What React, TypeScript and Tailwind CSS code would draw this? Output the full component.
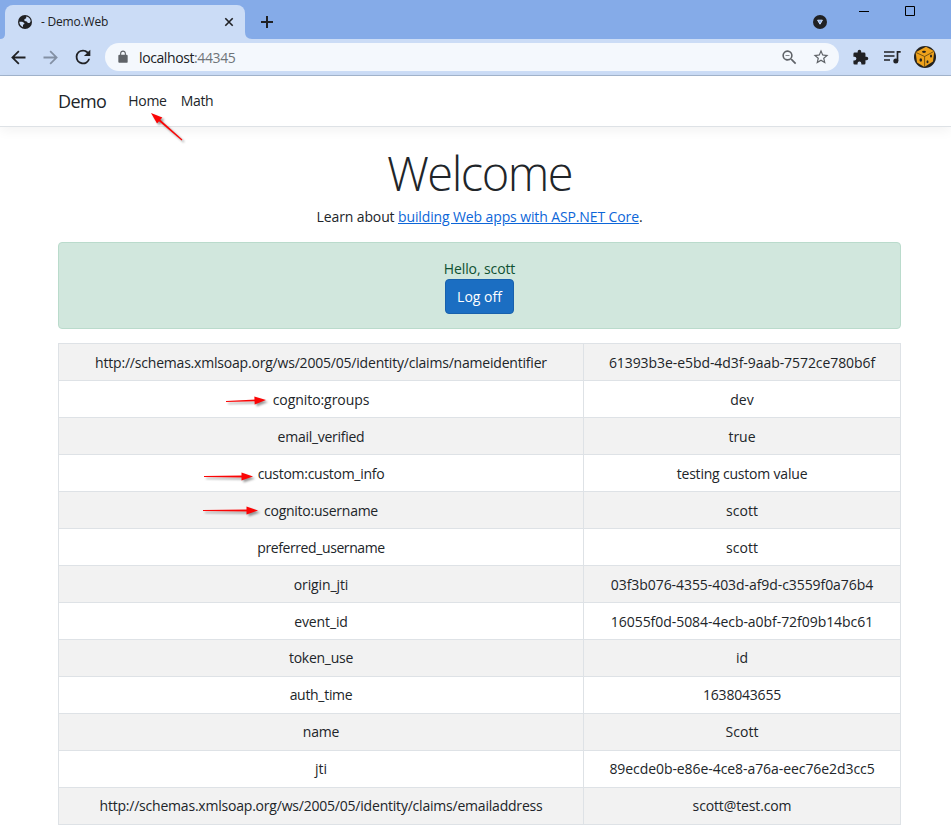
import React from "react";

/** Claim type, claim value, and the tracking of each of the two cells. */
const claims: [string, string, string, string][] = [
  ["http://schemas.xmlsoap.org/ws/2005/05/identity/claims/nameidentifier", "61393b3e-e5bd-4d3f-9aab-7572ce780b6f", "tracking-[-0.2px]", "tracking-[-0.07px]"],
  ["cognito:groups", "dev", "tracking-[-0.07px]", ""],
  ["email_verified", "true", "tracking-[-0.27px]", ""],
  ["custom:custom_info", "testing custom value", "tracking-[-0.28px]", "tracking-[-0.2px]"],
  ["cognito:username", "scott", "tracking-[-0.25px]", ""],
  ["preferred_username", "scott", "tracking-[-0.4px]", ""],
  ["origin_jti", "03f3b076-4355-403d-af9d-c3559f0a76b4", "tracking-[-0.1px]", "tracking-[-0.07px]"],
  ["event_id", "16055f0d-5084-4ecb-a0bf-72f09b14bc61", "tracking-[-0.13px]", "tracking-[-0.05px]"],
  ["token_use", "id", "tracking-[-0.25px]", ""],
  ["auth_time", "1638043655", "tracking-[-0.3px]", "tracking-[-0.2px]"],
  ["name", "Scott", "tracking-[-0.2px]", ""],
  ["jti", "89ecde0b-e86e-4ce8-a76a-eec76e2d3cc5", "", "tracking-[-0.07px]"],
  ["http://schemas.xmlsoap.org/ws/2005/05/identity/claims/emailaddress", "scott@test.com", "tracking-[-0.21px]", "tracking-[-0.13px]"],
];

function Icon({ d, className }: { d: string; className: string }) {
  return (
    <svg viewBox="0 0 24 24" fill="currentColor" className={`shrink-0 ${className}`}>
      <path d={d} />
    </svg>
  );
}

function TabStrip() {
  return (
    <div className="flex h-[39px] items-end bg-[#85abe8]">
      <div className="relative ml-[5px] flex h-[34px] w-[240px] items-center rounded-t-[8px] bg-[#cbdcf6] pl-[13px] pr-[9px]">
        <svg viewBox="0 0 8 8" className="absolute -left-[5px] bottom-0 h-[5px] w-[5px]"><path d="M8 0v8H0Q8 8 8 0" fill="#cbdcf6" /></svg>
        <svg viewBox="0 0 8 8" className="absolute -right-[7px] bottom-0 h-[7px] w-[7px]"><path d="M0 0v8h8Q0 8 0 0" fill="#cbdcf6" /></svg>
        <svg viewBox="0 0 14 14" className="h-[14px] w-[14px] shrink-0">
          <circle cx="7" cy="7" r="7" fill="#202124" />
          <path d="M1.300 6.800c2.400-.500 4.600.100 5.100 1.500.200.900-.500 1.200-1.400 1.200v2.600C2.800 11.300 1.400 9.400 1.300 6.800zM8.300 1.500c2.400.500 4.100 2.300 4.400 4.600-.400 1.600-1.300 2.300-2.600 1.900-.800-.300-.700-1.200-1.500-1.500-1.200-.200-2.300-.500-2.300-1.500 0-1.100.800-1.200 1.500-1.500.600-.400.300-1.200.500-2z" fill="#cbdcf6" />
        </svg>
        <span className="ml-[9px] text-[12px] tracking-[-0.2px] text-[#202124]">- Demo.Web</span>
        <svg viewBox="0 0 14 14" className="ml-auto h-[14px] w-[14px]"><path d="M3.300 3.300l7.400 7.400M10.700 3.300l-7.400 7.400" stroke="#202124" strokeWidth="1.600" /></svg>
      </div>
      <svg viewBox="0 0 14 14" className="mb-[10px] ml-[15px] h-[14px] w-[14px]"><path d="M7 1v12M1 7h12" stroke="#202124" strokeWidth="2" /></svg>
      <svg viewBox="0 0 14 14" className="mb-[10px] ml-[539px] h-[14px] w-[14px]"><circle cx="7" cy="7" r="7" fill="#202124" /><path d="M4.600 5.200h4.800L7 9.200z" fill="#85abe8" stroke="#cfe0fb" strokeWidth="1" /></svg>
      <svg viewBox="0 0 60 12" className="mb-[22px] ml-[31px] h-[12px] w-[60px]"><path d="M1 6.500h10M47.500 1.500h9v9h-9z" fill="none" stroke="#000" /></svg>
    </div>
  );
}

function Toolbar() {
  return (
    <div className="flex h-[37px] items-center border-b border-[#a2b4cc] bg-[#cbdcf6] text-[#202124]">
      <Icon className="ml-[8px] h-[21px] w-[21px]" d="M20 10.800H7.600l5.500-5.500L11.700 3.900 3.600 12l8.100 8.100 1.400-1.400-5.500-5.500H20z" />
      <Icon className="ml-[11px] h-[21px] w-[21px] text-[#8390a4]" d="M4 10.800h12.400l-5.500-5.500 1.400-1.400 8.100 8.100-8.100 8.100-1.400-1.400 5.500-5.500H4z" />
      <Icon className="ml-[11px] h-[22px] w-[22px]" d="M17.650 6.350A7.960 7.960 0 0 0 12 4a8 8 0 1 0 7.730 10h-2.080A6 6 0 1 1 12 6c1.660 0 3.140.690 4.220 1.780L13 11h7V4z" />
      <div className="ml-[11px] flex h-[28px] w-[734px] items-center rounded-full bg-[#f4f8fd] pl-[11px] pr-[9px]">
        <Icon className="h-[14px] w-[14px] text-[#5f6368]" d="M18 8h-1V6c0-2.760-2.240-5-5-5S7 3.240 7 6v2H6a2 2 0 0 0-2 2v10c0 1.100.900 2 2 2h12a2 2 0 0 0 2-2V10a2 2 0 0 0-2-2zM8.900 8V6a3.100 3.100 0 0 1 6.200 0v2z" />
        <span className="ml-[9px] text-[14px] tracking-[-0.4px]">localhost<span className="text-[#6f7479]">:44345</span></span>
        <Icon className="ml-auto h-[19px] w-[19px] text-[#5f6368]" d="M15.500 14h-.790l-.280-.270A6.500 6.500 0 1 0 13.730 14.430l.270.280v.790l5 4.990L20.490 19zM9.500 14a4.500 4.500 0 1 1 0-9 4.500 4.500 0 0 1 0 9zM7 9h5v1H7z" />
        <Icon className="ml-[13px] h-[18px] w-[18px] text-[#5f6368]" d="M22 9.240l-7.190-.620L12 2 9.190 8.630 2 9.240l5.460 4.730L5.820 21 12 17.270 18.180 21l-1.630-7.030zM12 15.400l-3.760 2.270 1-4.280-3.320-2.880 4.380-.380L12 6.100l1.710 4.040 4.380.380-3.320 2.880 1 4.280z" />
      </div>
      <Icon className="ml-[13px] h-[17px] w-[17px]" d="M20.500 11H19V7a2 2 0 0 0-2-2h-4V3.500a2.500 2.500 0 0 0-5 0V5H4a2 2 0 0 0-2 2v3.800h1.500a2.700 2.700 0 0 1 0 5.400H2V20a2 2 0 0 0 2 2h3.800v-1.500a2.700 2.700 0 0 1 5.400 0V22H17a2 2 0 0 0 2-2v-4h1.500a2.500 2.500 0 0 0 0-5z" />
      <svg viewBox="0 0 18 16" className="ml-[15px] h-[16px] w-[18px]"><path d="M0 3h10.500M0 7h10.500M0 11h6M13.500 12V2.800h3.200" fill="none" stroke="#202124" strokeWidth="1.700" /><circle cx="11.800" cy="12" r="2.500" fill="#202124" /></svg>
      <svg viewBox="0 0 22 22" className="ml-[12px] h-[22px] w-[22px]">
        <circle cx="11" cy="11" r="11" fill="#24221e" />
        <path d="M1.600 6.300 12 .800l8.300 4.400L19 15.500l-8.600 5.500-7.400-4.500z" fill="#efa21b" />
        <path d="M1.600 6.300l9 4.200 9.700-5.300M10.600 10.500V21" fill="none" stroke="#59400f" strokeWidth=".800" />
        <g fill="#24221e"><ellipse cx="10" cy="5.800" rx="2" ry="1.100" /><ellipse cx="6.800" cy="14" rx="1.300" ry="1.700" /><ellipse cx="13.500" cy="15.800" rx="1" ry="1.500" /><ellipse cx="17" cy="10" rx="1" ry="1.500" /></g>
      </svg>
    </div>
  );
}

/** Hand-placed pointers drawn over the page: tail (x1, y1) to tip (x2, y2). */
const arrows = [
  [182, 140, 151, 113],
  [226, 401.5, 266, 400],
  [204, 476.5, 253, 476.5],
  [203, 510.5, 258, 510.5],
];

function Arrows() {
  return (
    <svg viewBox="0 0 951 840" className="pointer-events-none absolute left-0 top-0 h-[840px] w-[951px] [filter:drop-shadow(2px_2px_1px_rgba(0,0,0,0.4))]">
      {arrows.map(([x1, y1, x2, y2]) => {
        const len = Math.hypot(x2 - x1, y2 - y1);
        const angle = (Math.atan2(y2 - y1, x2 - x1) * 180) / Math.PI;
        return (
          <g key={y1} transform={`translate(${x1} ${y1}) rotate(${angle})`} fill="#fb0505">
            <path d={`M0 -.6L${len - 10} -1v2L0 .6z`} />
            <path d={`M${len} 0l-11.500 -4v8z`} />
          </g>
        );
      })}
    </svg>
  );
}

export default function App() {
  return (
    <div className="relative h-[840px] w-[951px] overflow-hidden bg-white font-['Open_Sans','Noto_Sans',sans-serif] text-[14px] text-[#212529]">
      <TabStrip />
      <Toolbar />
      <nav className="flex h-[51px] items-center border-b border-[#dee2e6] pb-px pl-[58px] shadow-[0_4px_11px_rgba(0,0,0,0.05)]">
        <span className="pt-px text-[18px] leading-none tracking-[-0.6px]">Demo</span>
        <span className="ml-[22px] tracking-[-0.3px]">Home</span>
        <span className="ml-[14px] tracking-[-0.3px]">Math</span>
      </nav>
      <main className="ml-[58px] w-[843px] text-center">
        <h1 className="h-[79px] pt-[17px] text-[47px] font-light leading-[58px] tracking-[-1.5px]">Welcome</h1>
        <p className="h-[36px] leading-[22px] tracking-[-0.12px]">Learn about <a className="text-[#0d66d8] underline">building Web apps with ASP.NET Core</a>.</p>
        <div className="flex h-[87px] flex-col items-center rounded-[4px] border border-[#badbcc] bg-[#d1e7dd] pt-[15px] text-[#0f5132]">
          <span className="leading-[21px] tracking-[-0.1px]">Hello, scott</span>
          <button className="h-[35px] w-[69px] rounded-[4px] border border-[#1861ac] bg-[#1b6ec2] text-white">Log off</button>
        </div>
        <table className="mt-[14px] w-full table-fixed border-collapse">
          <colgroup><col className="w-[525px]" /><col /></colgroup>
          <tbody>
            {claims.map(([type, value, typeTracking, valueTracking], i) => {
              const cell = `border border-[#dee2e6] p-0 ${i < 8 ? "pt-px" : "pb-px"}`;
              return (
                <tr key={type} className="h-[37px] odd:bg-[#f2f2f2]">
                  <td className={`${cell} ${typeTracking}`}>{type}</td>
                  <td className={`${cell} ${valueTracking}`}>{value}</td>
                </tr>
              );
            })}
          </tbody>
        </table>
      </main>
      <Arrows />
    </div>
  );
}
